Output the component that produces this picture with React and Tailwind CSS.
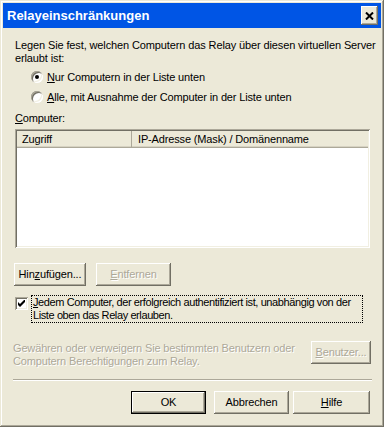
import React from 'react';

const raised =
  'shadow-[inset_-1px_-1px_#716f64,inset_1px_1px_#ffffff,inset_-2px_-2px_#aca899,inset_2px_2px_#ece9d8]';
const sunken =
  'shadow-[inset_1px_1px_#aca899,inset_-1px_-1px_#ffffff,inset_2px_2px_#716f64,inset_-2px_-2px_#f1efe2]';
const disabledText = 'text-[#aca899] [text-shadow:1px_1px_0_#ffffff]';

const Key = ({ children }) => <span className="underline underline-offset-[1px]">{children}</span>;

const Button = ({ children, className = '', disabled, isDefault }) => {
  const inner = (
    <div
      className={`flex h-full w-full items-center justify-center bg-[#ece9d8] ${raised} ${
        disabled ? disabledText : 'text-black'
      }`}
    >
      {children}
    </div>
  );
  if (isDefault) {
    return <div className={`border border-black ${className}`}>{inner}</div>;
  }
  return <div className={className}>{inner}</div>;
};

const Radio = ({ checked, children }) => (
  <div className="flex h-[14px] items-center">
    <div className="relative h-[12px] w-[12px] rounded-full bg-white shadow-[inset_1px_1px_#aca899,inset_-1px_-1px_#ffffff,inset_2px_2px_#716f64,inset_-2px_-2px_#f1efe2]">
      {checked && (
        <div className="absolute left-[4px] top-[4px] h-[4px] w-[4px] rounded-full bg-black" />
      )}
    </div>
    <span className="ml-[4px]">{children}</span>
  </div>
);

export default function App() {
  return (
    <div
      className="flex h-[427px] w-[384px] flex-col overflow-hidden whitespace-nowrap bg-[#ece9d8] p-[3px] text-[11px] leading-[13px] tracking-[-0.15px] text-black shadow-[inset_-1px_-1px_#716f64,inset_1px_1px_#ece9d8,inset_-2px_-2px_#aca899,inset_2px_2px_#ffffff]"
      style={{ fontFamily: '"Liberation Sans", Arial, sans-serif' }}
    >
      {/* title bar */}
      <div className="flex h-[25px] shrink-0 items-center justify-between bg-[#0055e5] pl-[4px] pr-[3px]">
        <span className="text-[13px] font-bold leading-none tracking-normal text-white">Relayeinschränkungen</span>
        <div className={`flex h-[19px] w-[17px] items-center justify-center bg-[#ece9d8] ${raised}`}>
          <svg width="9" height="8" viewBox="0 0 9 8">
            <path d="M1 0.5L8 7.5M8 0.5L1 7.5" stroke="#000" strokeWidth="2" />
          </svg>
        </div>
      </div>

      <div className="flex flex-1 flex-col pl-[12px] pr-[11px]">
        <p className="mt-[11px] tracking-[-0.12px]">
          Legen Sie fest, welchen Computern das Relay über diesen virtuellen Server
          <br />
          erlaubt ist:
        </p>

        <div className="ml-[16px] mt-[5px] flex flex-col gap-[6px]">
          <Radio checked>
            <Key>N</Key>ur Computern in der Liste unten
          </Radio>
          <Radio>
            <Key>A</Key>lle, mit Ausnahme der Computer in der Liste unten
          </Radio>
        </div>

        <div className="mt-[8px]">
          <Key>C</Key>omputer:
        </div>

        <div className={`mt-[4px] h-[119px] shrink-0 bg-white p-[2px] ${sunken}`}>
          <div className="flex h-[17px] bg-[#ece9d8] shadow-[inset_0_-1px_#aca899,inset_0_-2px_#d6d2c2]">
            <div className="flex w-[115px] items-center pl-[5px] shadow-[inset_-1px_0_#aca899]">Zugriff</div>
            <div className="flex items-center pl-[6px]">IP-Adresse (Mask) / Domänenname</div>
          </div>
        </div>

        <div className="mt-[15px] flex gap-[10px]">
          <Button className="ml-[-1px] h-[23px] w-[72px]">
            Hin<Key>z</Key>ufügen...
          </Button>
          <Button className="h-[23px] w-[75px]" disabled>
            <Key>E</Key>ntfernen
          </Button>
        </div>

        <div className="mt-[9px] flex items-start">
          <div className={`mt-[2px] flex h-[13px] w-[13px] shrink-0 items-center justify-center bg-white ${sunken}`}>
            <svg width="7" height="7" viewBox="0 0 7 7">
              <path d="M0 2v3l2 2 5-5V-1L2 4z" fill="#000" />
            </svg>
          </div>
          <div className="ml-[3px] w-[332px] border border-dotted border-black px-[1px] tracking-[-0.4px]">
            <Key>J</Key>edem Computer, der erfolgreich authentifiziert ist, unabhängig von der
            <br />
            Liste oben das Relay erlauben.
          </div>
        </div>

        <div className="mt-[18px] flex items-start justify-between">
          <div className={`ml-[-2px] mt-[1px] ${disabledText}`}>
            Gewähren oder verweigern Sie bestimmten Benutzern oder
            <br />
            Computern Berechtigungen zum Relay.
          </div>
          <Button className="mr-[-1px] h-[23px] w-[60px]" disabled>
            <Key>B</Key>enutzer...
          </Button>
        </div>

        <div className="mx-[-2px] mt-[11px] h-[2px] shadow-[inset_0_1px_#aca899,inset_0_-1px_#ffffff]" />

        <div className="mt-[10px] flex justify-end">
          <Button className="h-[23px] w-[75px]" isDefault>
            OK
          </Button>
          <Button className="ml-[8px] h-[23px] w-[75px]">Abbrechen</Button>
          <Button className="ml-[4px] h-[23px] w-[77px]">
            <Key>H</Key>ilfe
          </Button>
        </div>
      </div>
    </div>
  );
}
